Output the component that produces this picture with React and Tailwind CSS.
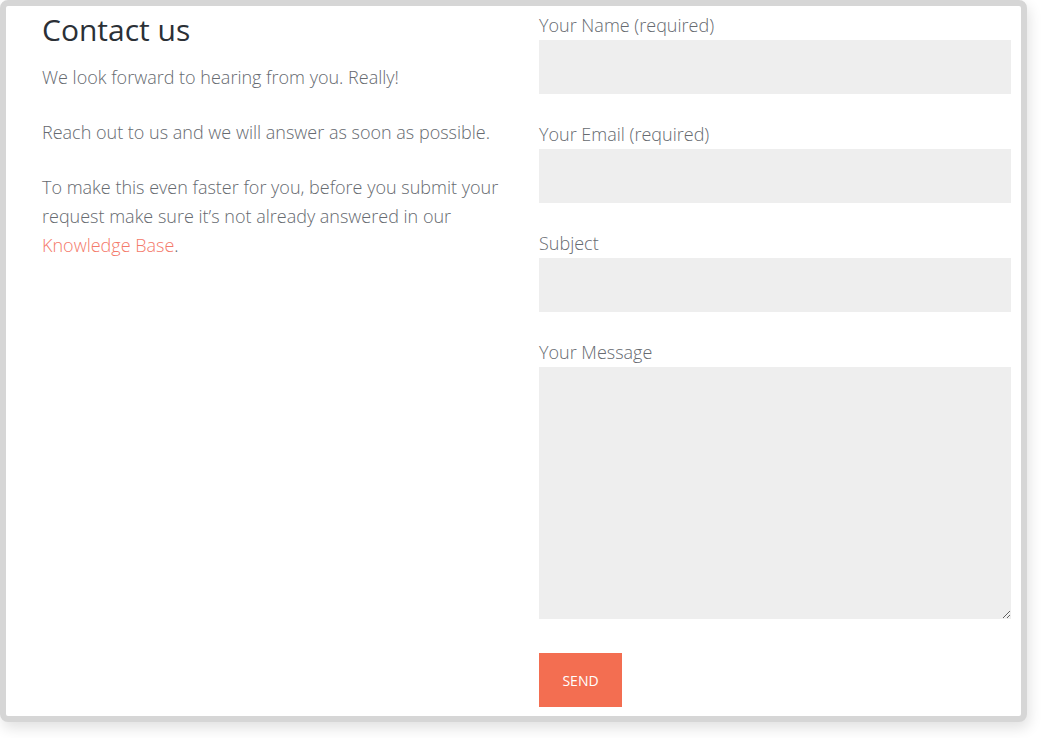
export default function App() {
  const fields = [
    { label: 'Your Name', extra: ' (required)' },
    { label: 'Your Email', extra: ' (required)' },
    { label: 'Subject', extra: '' },
  ];

  return (
    <div className="w-[1043px] h-[738px] bg-white" style={{ fontFamily: '"Open Sans", sans-serif' }}>
      <div className="w-[1027px] h-[722px] border-[6px] border-[#d6d6d6] rounded-[8px] bg-white shadow-[2px_6px_14px_rgba(0,0,0,0.12)] flex pt-[5px] pl-[36px] pr-[10px]">
        <div className="w-[468px]">
          <h1 className="text-[30px] leading-[36px] mt-[1px] text-[#2b3036] font-normal">Contact us</h1>
          <div className="mt-[15px] text-[18px] leading-[29px] font-light text-[#666a70] space-y-[26px]">
            <p>We look forward to hearing from you. Really!</p>
            <p>Reach out to us and we will answer as soon as possible.</p>
            <p>
              To make this even faster for you, before you submit your request make sure it’s not already answered in our{' '}
              <a href="#" className="text-[#f4796a]">Knowledge Base</a>.
            </p>
          </div>
        </div>

        <form className="ml-[29px] w-[472px] text-[18px] font-light text-[#666a70]" onSubmit={(e) => e.preventDefault()}>
          {fields.map((f) => (
            <div key={f.label} className="mb-[26px]">
              <label className="block leading-[29px]">
                {f.label}{f.extra}
              </label>
              <input type="text" className="block w-full h-[54px] bg-[#eeeeee] outline-none" />
            </div>
          ))}
          <div>
            <label className="block leading-[29px]">Your Message</label>
            <textarea className="block w-full h-[252px] bg-[#eeeeee] outline-none resize-y" />
          </div>
          <button
            type="submit"
            className="mt-[34px] w-[83px] h-[54px] bg-[#f36e51] text-white text-[14px] font-normal"
          >
            SEND
          </button>
        </form>
      </div>
    </div>
  );
}
